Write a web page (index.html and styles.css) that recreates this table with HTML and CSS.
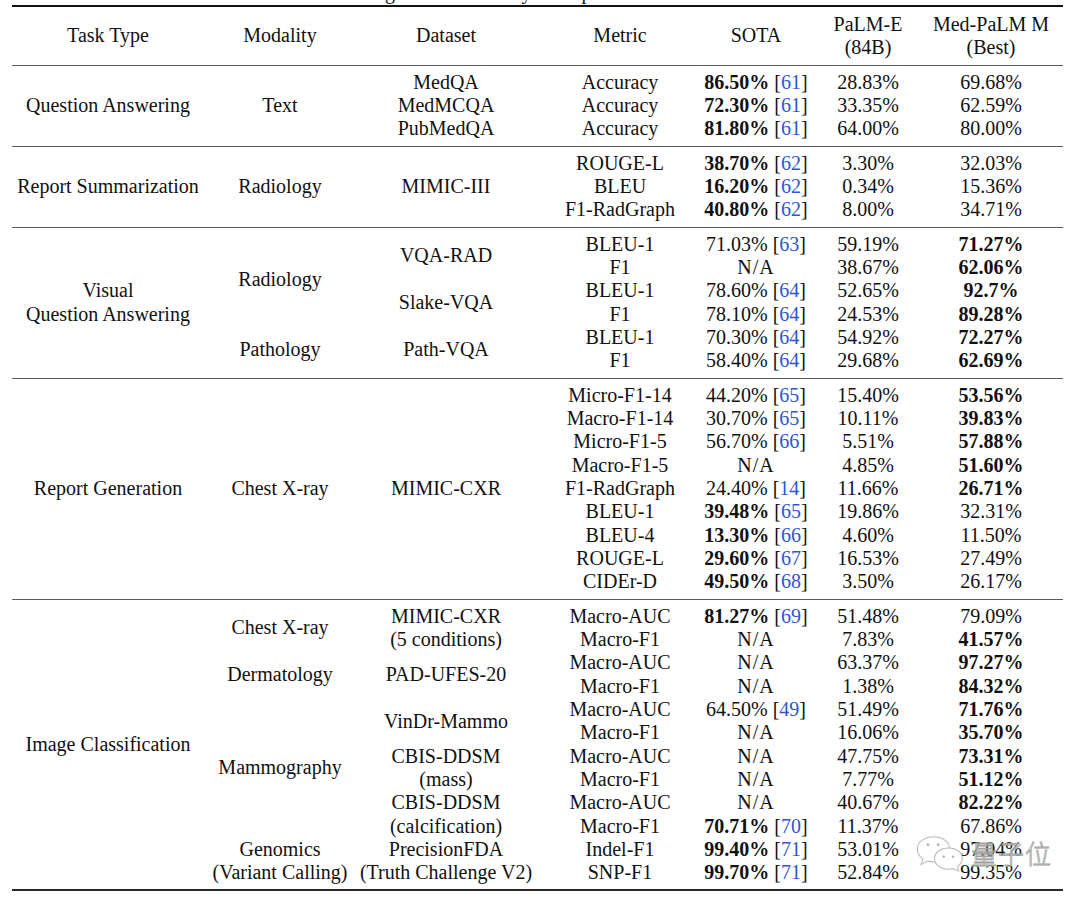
FILE: index.html
```html
<!DOCTYPE html>
<html lang="en">
<head>
<meta charset="utf-8">
<title>Performance comparison on MultiMedBench</title>
<link rel="stylesheet" href="styles.css">
</head>
<body>
<div class="page">
  <div class="caption"><div class="caption-line">with the general models by the top score</div></div>
  <div class="table">
    <div class="sec head">
      <div class="r2">Task Type</div>
      <div class="r2">Modality</div>
      <div class="r2">Dataset</div>
      <div class="r2">Metric</div>
      <div class="r2">SOTA</div>
      <div class="r2">PaLM-E<br>(84B)</div>
      <div class="r2">Med-PaLM M<br>(Best)</div>
    </div>

    <div class="sec">
      <div class="r3">Question Answering</div>
      <div class="r3">Text</div>
      <div>MedQA</div><div>Accuracy</div><div><b>86.50%</b> [<a>61</a>]</div><div>28.83%</div><div>69.68%</div>
      <div>MedMCQA</div><div>Accuracy</div><div><b>72.30%</b> [<a>61</a>]</div><div>33.35%</div><div>62.59%</div>
      <div>PubMedQA</div><div>Accuracy</div><div><b>81.80%</b> [<a>61</a>]</div><div>64.00%</div><div>80.00%</div>
    </div>

    <div class="sec">
      <div class="r3">Report Summarization</div>
      <div class="r3">Radiology</div>
      <div class="r3">MIMIC-III</div>
      <div>ROUGE-L</div><div><b>38.70%</b> [<a>62</a>]</div><div>3.30%</div><div>32.03%</div>
      <div>BLEU</div><div><b>16.20%</b> [<a>62</a>]</div><div>0.34%</div><div>15.36%</div>
      <div>F1-RadGraph</div><div><b>40.80%</b> [<a>62</a>]</div><div>8.00%</div><div>34.71%</div>
    </div>

    <div class="sec">
      <div class="r6">Visual<br>Question Answering</div>
      <div class="r4">Radiology</div>
      <div class="r2">VQA-RAD</div>
      <div>BLEU-1</div><div>71.03% [<a>63</a>]</div><div>59.19%</div><div><b>71.27%</b></div>
      <div>F1</div><div class="na">N/A</div><div>38.67%</div><div><b>62.06%</b></div>
      <div class="r2">Slake-VQA</div>
      <div>BLEU-1</div><div>78.60% [<a>64</a>]</div><div>52.65%</div><div><b>92.7%</b></div>
      <div>F1</div><div>78.10% [<a>64</a>]</div><div>24.53%</div><div><b>89.28%</b></div>
      <div class="r2">Pathology</div>
      <div class="r2">Path-VQA</div>
      <div>BLEU-1</div><div>70.30% [<a>64</a>]</div><div>54.92%</div><div><b>72.27%</b></div>
      <div>F1</div><div>58.40% [<a>64</a>]</div><div>29.68%</div><div><b>62.69%</b></div>
    </div>

    <div class="sec">
      <div class="r9">Report Generation</div>
      <div class="r9">Chest X-ray</div>
      <div class="r9">MIMIC-CXR</div>
      <div>Micro-F1-14</div><div>44.20% [<a>65</a>]</div><div>15.40%</div><div><b>53.56%</b></div>
      <div>Macro-F1-14</div><div>30.70% [<a>65</a>]</div><div>10.11%</div><div><b>39.83%</b></div>
      <div>Micro-F1-5</div><div>56.70% [<a>66</a>]</div><div>5.51%</div><div><b>57.88%</b></div>
      <div>Macro-F1-5</div><div class="na">N/A</div><div>4.85%</div><div><b>51.60%</b></div>
      <div>F1-RadGraph</div><div>24.40% [<a>14</a>]</div><div>11.66%</div><div><b>26.71%</b></div>
      <div>BLEU-1</div><div><b>39.48%</b> [<a>65</a>]</div><div>19.86%</div><div>32.31%</div>
      <div>BLEU-4</div><div><b>13.30%</b> [<a>66</a>]</div><div>4.60%</div><div>11.50%</div>
      <div>ROUGE-L</div><div><b>29.60%</b> [<a>67</a>]</div><div>16.53%</div><div>27.49%</div>
      <div>CIDEr-D</div><div><b>49.50%</b> [<a>68</a>]</div><div>3.50%</div><div>26.17%</div>
    </div>

    <div class="sec last">
      <div class="r12">Image Classification</div>
      <div class="r2">Chest X-ray</div>
      <div class="r2">MIMIC-CXR<br>(5 conditions)</div>
      <div>Macro-AUC</div><div><b>81.27%</b> [<a>69</a>]</div><div>51.48%</div><div>79.09%</div>
      <div>Macro-F1</div><div class="na">N/A</div><div>7.83%</div><div><b>41.57%</b></div>
      <div class="r2">Dermatology</div>
      <div class="r2">PAD-UFES-20</div>
      <div>Macro-AUC</div><div class="na">N/A</div><div>63.37%</div><div><b>97.27%</b></div>
      <div>Macro-F1</div><div class="na">N/A</div><div>1.38%</div><div><b>84.32%</b></div>
      <div class="r6">Mammography</div>
      <div class="r2">VinDr-Mammo</div>
      <div>Macro-AUC</div><div>64.50% [<a>49</a>]</div><div>51.49%</div><div><b>71.76%</b></div>
      <div>Macro-F1</div><div class="na">N/A</div><div>16.06%</div><div><b>35.70%</b></div>
      <div class="r2">CBIS-DDSM<br>(mass)</div>
      <div>Macro-AUC</div><div class="na">N/A</div><div>47.75%</div><div><b>73.31%</b></div>
      <div>Macro-F1</div><div class="na">N/A</div><div>7.77%</div><div><b>51.12%</b></div>
      <div class="r2">CBIS-DDSM<br>(calcification)</div>
      <div>Macro-AUC</div><div class="na">N/A</div><div>40.67%</div><div><b>82.22%</b></div>
      <div>Macro-F1</div><div><b>70.71%</b> [<a>70</a>]</div><div>11.37%</div><div>67.86%</div>
      <div class="r2">Genomics<br>(Variant Calling)</div>
      <div class="r2">PrecisionFDA<br>(Truth Challenge V2)</div>
      <div>Indel-F1</div><div><b>99.40%</b> [<a>71</a>]</div><div>53.01%</div><div>97.04%</div>
      <div>SNP-F1</div><div><b>99.70%</b> [<a>71</a>]</div><div>52.84%</div><div>99.35%</div>
    </div>
  </div>

  <div class="watermark">
    <svg class="wm-icon" width="52" height="38" viewBox="0 0 56 40">
      <path d="M20 2.5 C10 2.5 2.5 8.5 2.5 16 C2.5 20.5 5 24 8.5 26.5 L6.5 32.5 L13.5 28.7 C15.5 29.3 17.7 29.6 20 29.6 C30 29.6 37.5 23.6 37.5 16 C37.5 8.5 30 2.5 20 2.5 Z" fill="rgba(255,255,255,0.5)" stroke="#b8b8b8" stroke-width="1.1"/>
      <circle cx="14" cy="11" r="1.6" fill="#b8b8b8"/>
      <circle cx="25" cy="11" r="1.6" fill="#b8b8b8"/>
      <path d="M36 14.5 C27.5 14.5 21 19.6 21 26 C21 32.4 27.5 37.5 36 37.5 C37.8 37.5 39.5 37.2 41 36.8 L47 39.5 L45.5 34.4 C48.8 32.3 51 29.3 51 26 C51 19.6 44.5 14.5 36 14.5 Z" fill="#fff" stroke="#b8b8b8" stroke-width="1.1"/>
      <circle cx="31" cy="24" r="1.4" fill="#b8b8b8"/>
      <circle cx="41" cy="24" r="1.4" fill="#b8b8b8"/>
    </svg>
    <span class="wm-text">量子位</span>
  </div>
</div>
</body>
</html>
```

FILE: styles.css
```css
html, body {
  margin: 0;
  padding: 0;
  background: #fff;
}

.page {
  position: relative;
  width: 1080px;
  height: 902px;
  overflow: hidden;
  font-family: "Liberation Serif", "Times New Roman", serif;
  font-size: 20px;
  color: #111;
}

.caption {
  height: 5px;
  overflow: hidden;
}

.caption-line {
  margin-top: -19px;
  padding-left: 315px;
  line-height: 23.33px;
  white-space: nowrap;
}

.table {
  width: 1051px;
  margin-left: 12px;
  border-top: 2px solid #111;
}

.sec {
  display: grid;
  grid-template-columns: 192px 152px 180px 168px 104px 120px 126px;
  grid-auto-rows: 23.33px;
  padding: 5px 9px 5px 0;
  border-bottom: 1px solid #5a5a5a;
  line-height: 23.33px;
}

.sec.head {
  padding-top: 5.5px;
  padding-bottom: 5.5px;
}

.sec.last {
  border-bottom: 2px solid #2a2a2a;
}

.sec > div {
  align-self: center;
  text-align: center;
  white-space: nowrap;
}

.r2 { grid-row: span 2; }
.r3 { grid-row: span 3; }
.r4 { grid-row: span 4; }
.r6 { grid-row: span 6; }
.r9 { grid-row: span 9; }
.r12 { grid-row: span 12; }

.sec b {
  font-weight: bold;
}

.sec a {
  color: #2f55d4;
  text-decoration: none;
}

.na {
  letter-spacing: 1px;
}

.watermark {
  position: absolute;
  left: 915px;
  top: 834px;
  display: flex;
  align-items: center;
  gap: 4px;
}

.wm-icon {
  display: block;
}

.wm-text {
  font-family: "Noto Sans CJK SC", sans-serif;
  font-size: 26px;
  font-weight: 300;
  line-height: 34px;
  color: rgba(255, 255, 255, 0.35);
  -webkit-text-stroke: 0.8px #a0a0a0;
  letter-spacing: 1px;
}
```
